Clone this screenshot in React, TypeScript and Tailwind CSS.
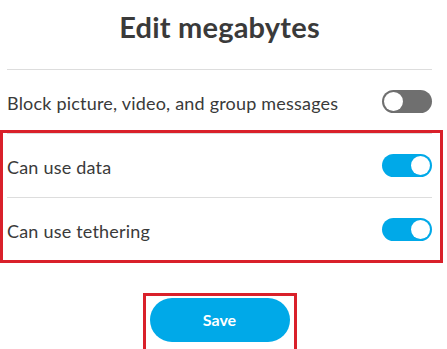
const rows = [
  { id: "block", label: "Block picture, video, and group messages", on: false },
  { id: "data", label: "Can use data", on: true },
  { id: "tether", label: "Can use tethering", on: true },
];

const Toggle = ({ on }: { on: boolean }) => (
  <div
    className={`w-[50px] h-[23px] rounded-full flex items-center px-[2px] ${
      on ? "bg-[#00a9e8] justify-end" : "bg-[#6f6f6f] justify-start"
    }`}
  >
    <div className="w-[19px] h-[19px] rounded-full bg-white" />
  </div>
);

const Row = ({ label, on }: { label: string; on: boolean }) => (
  <div className="h-[64px] flex items-center justify-between border-b border-[#dddddd]">
    <span className="pt-[3px] text-[18px] tracking-[0.2px] text-[#3a3a3a]">{label}</span>
    <Toggle on={on} />
  </div>
);

const App = () => {
  return (
    <main
      className="w-[447px] h-[349px] bg-white overflow-hidden pl-[7px] pr-[15px]"
      style={{ fontFamily: "Lato, 'Open Sans', sans-serif" }}
    >
      <h1 className="h-[70px] pt-[5px] text-center text-[29px] font-bold tracking-[0.2px] text-[#3a3a3a] border-b border-[#dddddd]">
        Edit megabytes
      </h1>

      <Row label={rows[0].label} on={rows[0].on} />

      {/* highlighted group */}
      <div className="relative">
        {rows.slice(1).map((row) => (
          <Row key={row.id} label={row.label} on={row.on} />
        ))}
        <div className="absolute left-[-7px] right-[-11px] top-[-4px] bottom-[-1px] border-[3px] border-[#d9202a] pointer-events-none" />
      </div>

      <div className="flex justify-center pt-[36px]">
        <div className="relative">
          <button className="w-[140px] h-[44px] rounded-full bg-[#00a9e8] text-white font-bold text-[16px]">
            Save
          </button>
          <div className="absolute left-[-7px] right-[-7px] top-[-5px] bottom-[-10px] border-[3px] border-[#d9202a] pointer-events-none" />
        </div>
      </div>
    </main>
  );
};

export default App;
